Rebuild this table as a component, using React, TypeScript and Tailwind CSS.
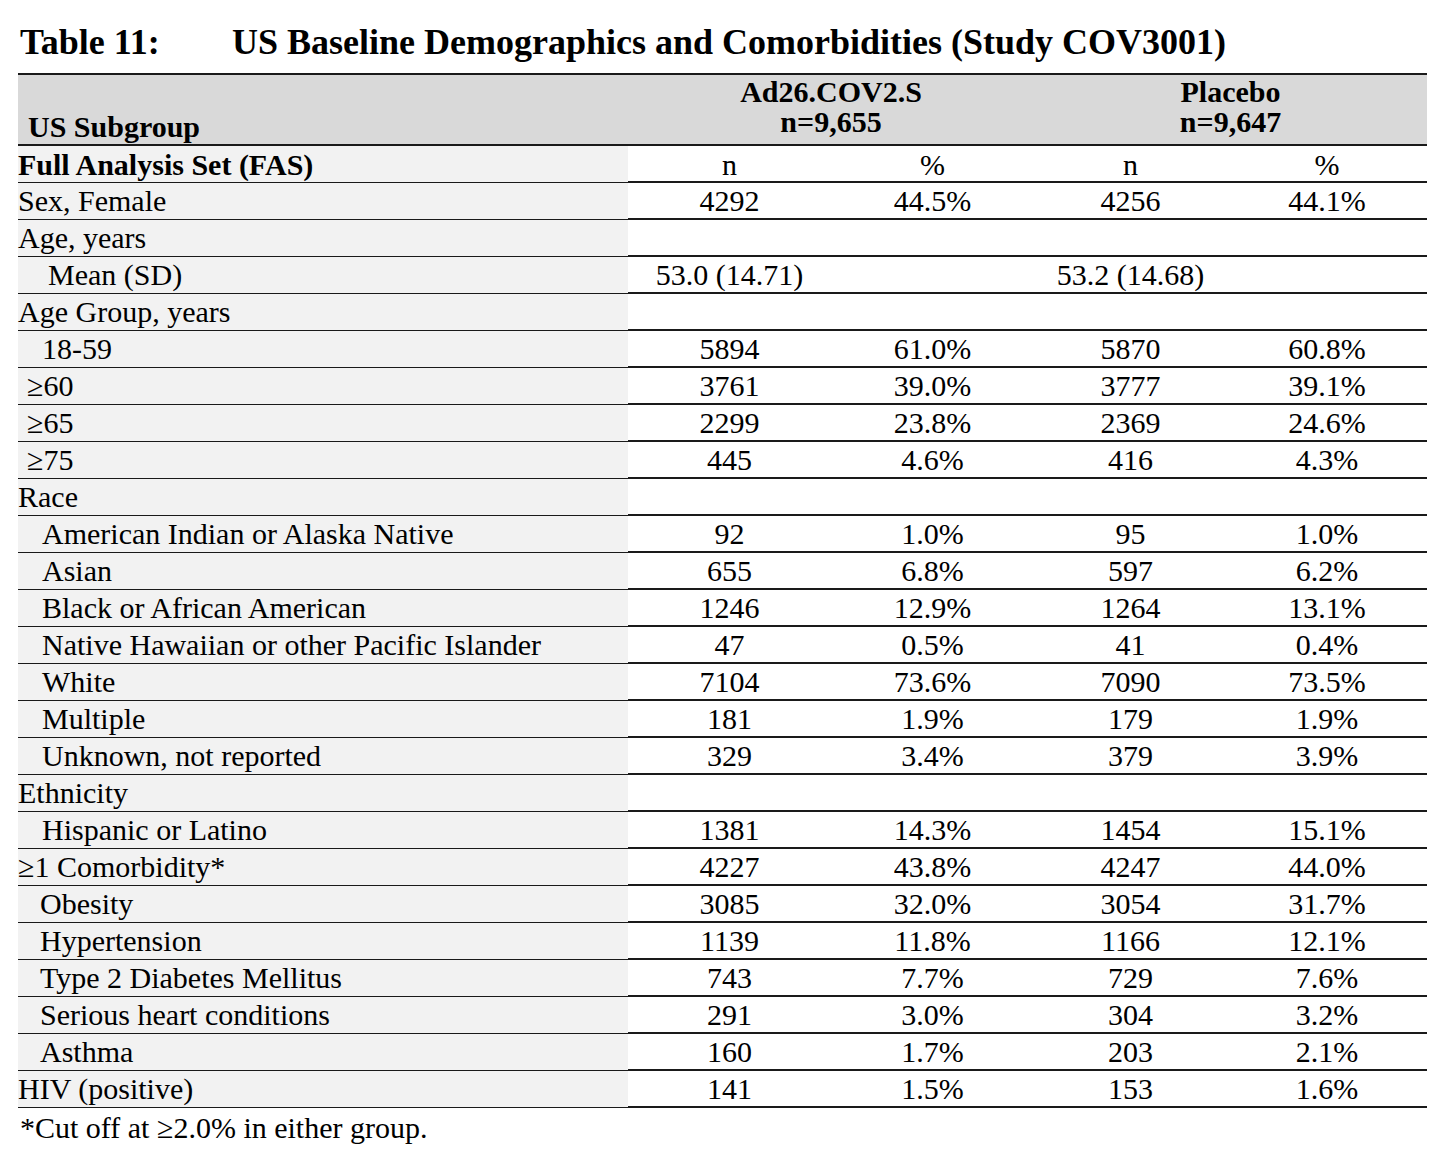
type Row = {
  label: string;
  indent?: string;
  cells?: [string, string, string, string];
  mean?: [string, string];
};

const rows: Row[] = [
  { label: "Sex, Female", cells: ["4292", "44.5%", "4256", "44.1%"] },
  { label: "Age, years" },
  { label: "Mean (SD)", indent: "pl-[30px]", mean: ["53.0 (14.71)", "53.2 (14.68)"] },
  { label: "Age Group, years" },
  { label: "18-59", indent: "pl-[24px]", cells: ["5894", "61.0%", "5870", "60.8%"] },
  { label: "≥60", indent: "pl-[9px]", cells: ["3761", "39.0%", "3777", "39.1%"] },
  { label: "≥65", indent: "pl-[9px]", cells: ["2299", "23.8%", "2369", "24.6%"] },
  { label: "≥75", indent: "pl-[9px]", cells: ["445", "4.6%", "416", "4.3%"] },
  { label: "Race" },
  { label: "American Indian or Alaska Native", indent: "pl-[24px]", cells: ["92", "1.0%", "95", "1.0%"] },
  { label: "Asian", indent: "pl-[24px]", cells: ["655", "6.8%", "597", "6.2%"] },
  { label: "Black or African American", indent: "pl-[24px]", cells: ["1246", "12.9%", "1264", "13.1%"] },
  { label: "Native Hawaiian or other Pacific Islander", indent: "pl-[24px]", cells: ["47", "0.5%", "41", "0.4%"] },
  { label: "White", indent: "pl-[24px]", cells: ["7104", "73.6%", "7090", "73.5%"] },
  { label: "Multiple", indent: "pl-[24px]", cells: ["181", "1.9%", "179", "1.9%"] },
  { label: "Unknown, not reported", indent: "pl-[24px]", cells: ["329", "3.4%", "379", "3.9%"] },
  { label: "Ethnicity" },
  { label: "Hispanic or Latino", indent: "pl-[24px]", cells: ["1381", "14.3%", "1454", "15.1%"] },
  { label: "≥1 Comorbidity*", cells: ["4227", "43.8%", "4247", "44.0%"] },
  { label: "Obesity", indent: "pl-[22px]", cells: ["3085", "32.0%", "3054", "31.7%"] },
  { label: "Hypertension", indent: "pl-[22px]", cells: ["1139", "11.8%", "1166", "12.1%"] },
  { label: "Type 2 Diabetes Mellitus", indent: "pl-[22px]", cells: ["743", "7.7%", "729", "7.6%"] },
  { label: "Serious heart conditions", indent: "pl-[22px]", cells: ["291", "3.0%", "304", "3.2%"] },
  { label: "Asthma", indent: "pl-[22px]", cells: ["160", "1.7%", "203", "2.1%"] },
  { label: "HIV (positive)", cells: ["141", "1.5%", "153", "1.6%"] },
];

const grid = "grid grid-cols-[610px_203px_203px_193px_200px]";

export default function App() {
  return (
    <div className="min-h-screen bg-white text-black font-['Liberation_Serif','Times_New_Roman',serif]">
      <div className="pl-[18px] pt-[20px] w-[1427px]">
        {/* Title */}
        <h1 className="flex text-[36px] leading-[44px] font-bold pl-[2px]">
          <span className="w-[212px]">Table 11:</span>
          <span>US Baseline Demographics and Comorbidities (Study COV3001)</span>
        </h1>

        <div className="mt-[9px] border-t-2 border-[#1a1a1a] text-[30px]">
          {/* Header */}
          <div className={`${grid} h-[71px] bg-[#d9d9d9] border-b-2 border-[#1a1a1a] font-bold leading-[30px]`}>
            <div className="flex items-end pl-[10px] pb-[2px]">US Subgroup</div>
            <div className="col-span-2 pt-[2px] text-center">
              <div>Ad26.COV2.S</div>
              <div>n=9,655</div>
            </div>
            <div className="col-span-2 pt-[2px] text-center">
              <div>Placebo</div>
              <div>n=9,647</div>
            </div>
          </div>

          {/* FAS row */}
          <div className={`${grid} h-[37px] border-b-2 border-[#1a1a1a] leading-[35px] pt-[1px]`}>
            <div className="bg-[#f2f2f2] font-bold -mt-[1px] pt-[1px]">Full Analysis Set (FAS)</div>
            <div className="text-center">n</div>
            <div className="text-center">%</div>
            <div className="text-center">n</div>
            <div className="text-center">%</div>
          </div>

          {rows.map((r) => (
            <div
              key={r.label}
              className={`${grid} h-[37px] border-b-2 border-[#1a1a1a] leading-[36px]`}
            >
              <div className={`bg-[#f2f2f2] whitespace-nowrap ${r.indent ?? ""}`}>{r.label}</div>
              {r.cells &&
                r.cells.map((c, i) => (
                  <div key={i} className="text-center">
                    {c}
                  </div>
                ))}
              {r.mean && (
                <>
                  <div className="text-center">{r.mean[0]}</div>
                  <div />
                  <div className="text-center">{r.mean[1]}</div>
                  <div />
                </>
              )}
            </div>
          ))}
        </div>

        <p className="text-[30px] leading-[35px] pl-[2px] pt-[2px]">*Cut off at ≥2.0% in either group.</p>
      </div>
    </div>
  );
}
